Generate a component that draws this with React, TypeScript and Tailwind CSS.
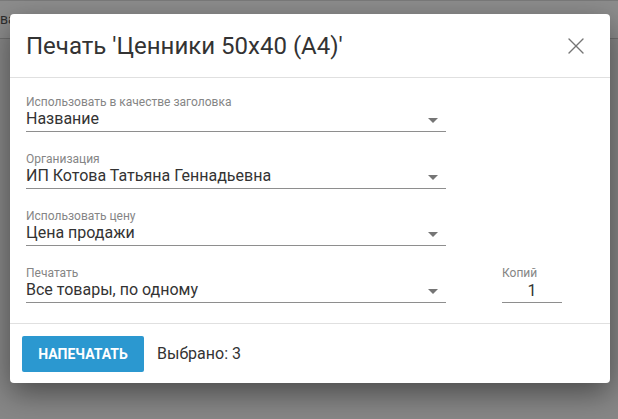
import { X } from "lucide-react";

const font = { fontFamily: "Roboto, 'Noto Sans', sans-serif" };

function Caret() {
    return (
        <svg width="10" height="5" viewBox="0 0 10 5" className="shrink-0 self-center">
            <path d="M0 0 L10 0 L5 5 Z" fill="#757575" />
        </svg>
    );
}

function SelectField({ label, value }: { label: string; value: string }) {
    return (
        <div className="w-[420px]">
            <div className="text-[12px] leading-[14px] text-[#858585]">{label}</div>
            <div className="flex items-start justify-between h-[23px] border-b border-[#8e8e8e] pr-[8px]">
                <span className="text-[16px] leading-[20px] text-[#333]">{value}</span>
                <Caret />
            </div>
        </div>
    );
}

export default function App() {
    return (
        <div className="relative w-[618px] h-[419px] overflow-hidden bg-[#878787]" style={font}>
            <div className="h-[39px] bg-[#8d8d8d] border-t border-[#7a7a7a] border-b border-b-[#707070] flex items-center">
                <span className="text-[14px] text-[#2e2e2e]">ва</span>
            </div>

            <div className="absolute left-[10px] top-[14px] w-[600px] bg-white rounded-[4px] shadow-[0_10px_30px_rgba(0,0,0,0.45)]">
                <div className="h-[64px] flex items-center justify-between pl-[16px] pr-[20px] border-b border-[#e0e0e0]">
                    <h1 className="text-[24px] text-[#333]">Печать 'Ценники 50x40 (A4)'</h1>
                    <X className="w-[28px] h-[28px] text-[#757575]" strokeWidth={1.2} />
                </div>

                <div className="px-[16px] pt-[17px] pb-[20px] flex flex-col gap-[20px]">
                    <SelectField label="Использовать в качестве заголовка" value="Название" />
                    <SelectField label="Организация" value="ИП Котова Татьяна Геннадьевна" />
                    <SelectField label="Использовать цену" value="Цена продажи" />
                    <div className="flex items-end gap-[56px]">
                        <SelectField label="Печатать" value="Все товары, по одному" />
                        <div className="w-[60px]">
                            <div className="text-[12px] leading-[14px] text-[#858585]">Копий</div>
                            <div className="h-[23px] pt-[1px] border-b border-[#8e8e8e] text-center text-[16px] leading-[20px] text-[#333]">1</div>
                        </div>
                    </div>
                </div>

                <div className="border-t border-[#e0e0e0] pt-[12px] pb-[11px] px-[12px] flex items-center gap-[13px]">
                    <button className="w-[122px] h-[36px] rounded-[2px] bg-[#2b98d0] text-white text-[14px] font-bold uppercase">
                        Напечатать
                    </button>
                    <span className="text-[16px] text-[#333]">Выбрано: 3</span>
                </div>
            </div>
        </div>
    );
}
